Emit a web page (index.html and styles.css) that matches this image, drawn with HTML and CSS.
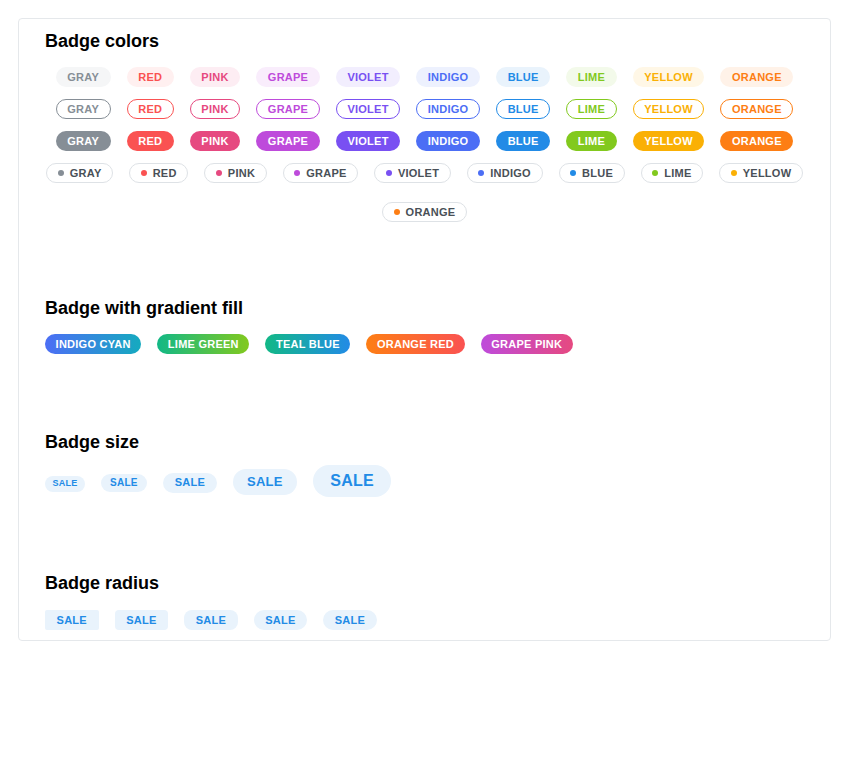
FILE: index.html
```html
<!DOCTYPE html>
<html>
<head>
<meta charset="utf-8">
<link rel="stylesheet" href="styles.css">
</head>
<body>
<div class="card">
  <section class="section s1">
    <h2 class="title">Badge colors</h2>
    <div class="rows">
      <div class="row">
        <span class="badge light gray">Gray</span>
        <span class="badge light red">Red</span>
        <span class="badge light pink">Pink</span>
        <span class="badge light grape">Grape</span>
        <span class="badge light violet">Violet</span>
        <span class="badge light indigo">Indigo</span>
        <span class="badge light blue">Blue</span>
        <span class="badge light lime">Lime</span>
        <span class="badge light yellow">Yellow</span>
        <span class="badge light orange">Orange</span>
      </div>
      <div class="row">
        <span class="badge outline gray">Gray</span>
        <span class="badge outline red">Red</span>
        <span class="badge outline pink">Pink</span>
        <span class="badge outline grape">Grape</span>
        <span class="badge outline violet">Violet</span>
        <span class="badge outline indigo">Indigo</span>
        <span class="badge outline blue">Blue</span>
        <span class="badge outline lime">Lime</span>
        <span class="badge outline yellow">Yellow</span>
        <span class="badge outline orange">Orange</span>
      </div>
      <div class="row">
        <span class="badge filled gray">Gray</span>
        <span class="badge filled red">Red</span>
        <span class="badge filled pink">Pink</span>
        <span class="badge filled grape">Grape</span>
        <span class="badge filled violet">Violet</span>
        <span class="badge filled indigo">Indigo</span>
        <span class="badge filled blue">Blue</span>
        <span class="badge filled lime">Lime</span>
        <span class="badge filled yellow">Yellow</span>
        <span class="badge filled orange">Orange</span>
      </div>
      <div class="dot-rows">
        <div class="row">
          <span class="badge dot gray">Gray</span>
          <span class="badge dot red">Red</span>
          <span class="badge dot pink">Pink</span>
          <span class="badge dot grape">Grape</span>
          <span class="badge dot violet">Violet</span>
          <span class="badge dot indigo">Indigo</span>
          <span class="badge dot blue">Blue</span>
          <span class="badge dot lime">Lime</span>
          <span class="badge dot yellow">Yellow</span>
        </div>
        <div class="row">
          <span class="badge dot orange">Orange</span>
        </div>
      </div>
    </div>
  </section>

  <section class="section s2">
    <h2 class="title">Badge with gradient fill</h2>
    <div class="row left">
      <span class="badge grad g-indigo-cyan">Indigo cyan</span>
      <span class="badge grad g-lime-green">Lime green</span>
      <span class="badge grad g-teal-blue">Teal blue</span>
      <span class="badge grad g-orange-red">Orange red</span>
      <span class="badge grad g-grape-pink">Grape pink</span>
    </div>
  </section>

  <section class="section s3">
    <h2 class="title">Badge size</h2>
    <div class="row left base">
      <span class="badge light blue size-xs">Sale</span>
      <span class="badge light blue size-sm">Sale</span>
      <span class="badge light blue size-md">Sale</span>
      <span class="badge light blue size-lg">Sale</span>
      <span class="badge light blue size-xl">Sale</span>
    </div>
  </section>

  <section class="section s4">
    <h2 class="title">Badge radius</h2>
    <div class="row left">
      <span class="badge light blue r-xs">Sale</span>
      <span class="badge light blue r-sm">Sale</span>
      <span class="badge light blue r-md">Sale</span>
      <span class="badge light blue r-lg">Sale</span>
      <span class="badge light blue r-xl">Sale</span>
    </div>
  </section>
</div>
</body>
</html>
```

FILE: styles.css
```css
* { box-sizing: border-box; }

body {
  margin: 0;
  background: #fff;
  font-family: "Liberation Sans", Arial, Helvetica, sans-serif;
}

.card {
  margin: 18px 19px 0 18px;
  border: 1px solid #e5e8eb;
  border-radius: 4px;
  padding: 10px 26px 10px 26px;
  background: #fff;
}

.title {
  margin: 0 0 14px 0;
  font-size: 18px;
  line-height: 24px;
  font-weight: 700;
  color: #000;
}

.s2 { margin-top: 74px; }
.s3 { margin-top: 76px; }
.s3 .title { margin-bottom: 11px; }
.s4 { margin-top: 74px; }
.s4 .title { margin-bottom: 15px; }

.rows {
  display: flex;
  flex-direction: column;
  gap: 12px;
}

.dot-rows {
  display: flex;
  flex-direction: column;
  gap: 19px;
}

.row {
  display: flex;
  justify-content: center;
  align-items: center;
  gap: 16px;
}

.row.left { justify-content: flex-start; }
.row.base { align-items: baseline; }

.badge {
  display: inline-flex;
  align-items: center;
  justify-content: center;
  height: 20px;
  padding: 0 10.6px;
  border-radius: 32px;
  border: 1px solid transparent;
  font-size: 11px;
  font-weight: 700;
  letter-spacing: 0.25px;
  text-transform: uppercase;
  white-space: nowrap;
  line-height: 1;
}

/* colour variables */
.gray   { --c: #868e96; --l: #f5f6f7; }
.red    { --c: #fa5252; --l: #fff0f0; }
.pink   { --c: #e64980; --l: #fdedf3; }
.grape  { --c: #be4bdb; --l: #f9edfc; }
.violet { --c: #7950f2; --l: #f2eefe; }
.indigo { --c: #4c6ef5; --l: #edf1fe; }
.blue   { --c: #228be6; --l: #e9f3fc; }
.lime   { --c: #82c91e; --l: #f3faea; }
.yellow { --c: #fab005; --l: #fff7e6; }
.orange { --c: #fd7e14; --l: #fff2e8; }

.light {
  background: var(--l);
  color: var(--c);
}

.outline {
  background: transparent;
  border-color: var(--c);
  color: var(--c);
}

.filled {
  background: var(--c);
  color: #fff;
}

.dot {
  background: #fff;
  border-color: #dee2e6;
  color: #495057;
}

.dot::before {
  content: "";
  width: 6px;
  height: 6px;
  border-radius: 50%;
  background: var(--c);
  margin-right: 6px;
  flex: none;
}

.grad { color: #fff; border: 0; }
.g-indigo-cyan { background: linear-gradient(90deg, #4c6ef5, #15aabf); }
.g-lime-green  { background: linear-gradient(90deg, #12b886, #82c91e); }
.g-teal-blue   { background: linear-gradient(90deg, #12b886, #228be6); }
.g-orange-red  { background: linear-gradient(90deg, #fd7e14, #fa5252); }
.g-grape-pink  { background: linear-gradient(90deg, #be4bdb, #e64980); }

.size-xs { height: 16px; font-size: 9px;  padding: 0 6.5px; }
.size-sm { height: 18px; font-size: 10px; padding: 0 8px; }
.size-md { height: 20px; font-size: 11px; padding: 0 11px; }
.size-lg { height: 26px; font-size: 13px; padding: 0 13px; }
.size-xl { height: 32px; font-size: 16px; padding: 0 16.5px; }

.r-xs { border-radius: 2px; }
.r-sm { border-radius: 4px; }
.r-md { border-radius: 8px; }
.r-lg { border-radius: 16px; }
.r-xl { border-radius: 32px; }
```
